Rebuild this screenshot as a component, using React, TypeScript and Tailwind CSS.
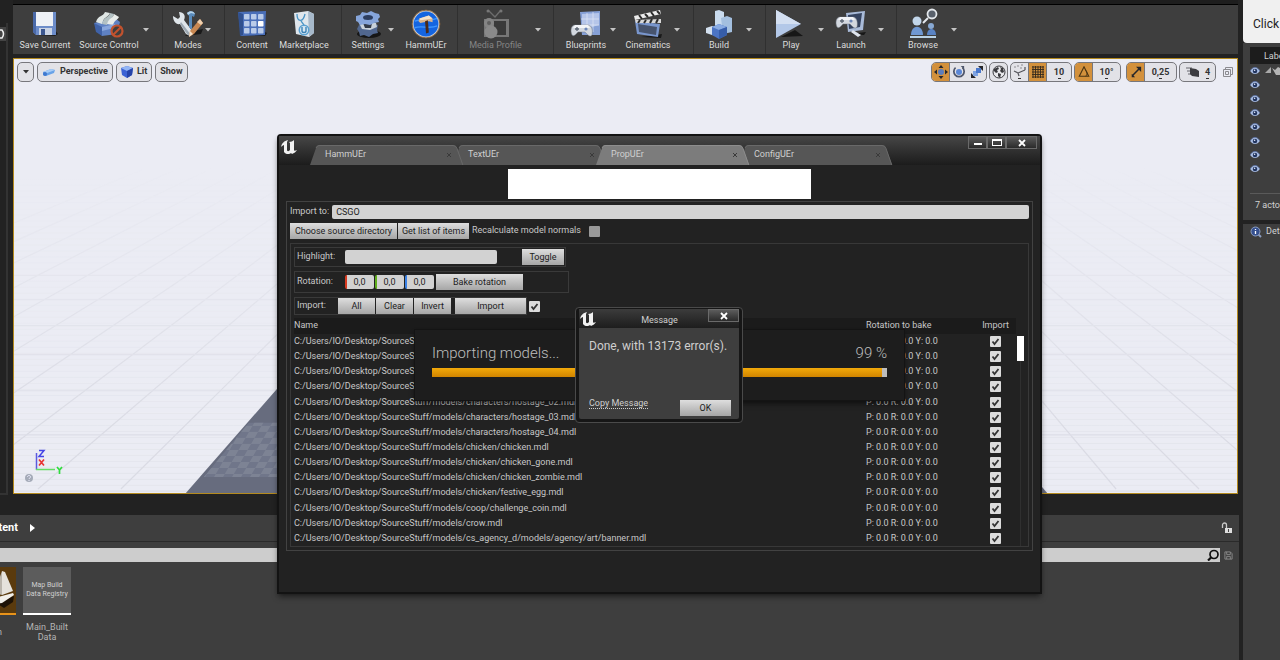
import React from 'react';
import clsx from 'clsx';

const PREFIX = 'C:/Users/IO/Desktop/SourceStuff/models/';

const models = [
  'characters/hostage.mdl',
  'characters/hostage_01.mdl',
  'characters/hostage_01_a.mdl',
  'characters/hostage_01_b.mdl',
  'characters/hostage_02.mdl',
  'characters/hostage_03.mdl',
  'characters/hostage_04.mdl',
  'chicken/chicken.mdl',
  'chicken/chicken_gone.mdl',
  'chicken/chicken_zombie.mdl',
  'chicken/festive_egg.mdl',
  'coop/challenge_coin.mdl',
  'crow.mdl',
  'cs_agency_d/models/agency/art/banner.mdl',
];

const light = 'bg-linear-to-b from-[#dedede] to-[#a6a6a6] text-[#1c1c1c] text-[9px] leading-4 h-4 whitespace-nowrap';

/* ---------- toolbar icons ---------- */

const SaveIcon = () => (
  <svg viewBox="0 0 28 28" className="size-7">
    <path d="M5 25l19 1 3-2-3-4z" fill="#1c1c1c" />
    <path d="M2 2h23v23H5l-3-3z" fill="#6c8cc9" />
    <path d="M2 2h3v23l-3-3z" fill="#4a69a8" />
    <path d="M5 2h17v14H5z" fill="#eef1f6" />
    <path d="M8 18h13v7H8z" fill="#c9d3e4" />
    <path d="M10 19h4v6h-4z" fill="#3c578f" />
  </svg>
);

const SourceIcon = () => (
  <svg viewBox="0 0 32 28" className="h-7 w-8">
    <path d="M1 13l21-5 5 4-3 12-15 2z" fill="#5f82c4" />
    <path d="M3 12C5 5 10 7 12 2l5 1c-2 5-6 3-8 11z" fill="#dfe6e4" />
    <path d="M9 14c2-8 7-6 8-11l4 1c-1 5-5 4-7 11z" fill="#b3c1c3" />
    <path d="M14 14c2-7 6-5 7-10l5 3c-2 4-4 2-6 8z" fill="#e8ecea" />
    <path d="M1 13l8 4v9l-6-4z" fill="#3f62a8" />
    <path d="M9 17l13-3-1 4-12 3z" fill="#88a6dc" />
    <circle cx="24" cy="21" r="5.5" fill="#3e3e3e" stroke="#c1522e" strokeWidth="2.2" />
    <path d="M20 25l8-8" stroke="#c1522e" strokeWidth="2.2" />
  </svg>
);

const ModesIcon = () => (
  <svg viewBox="0 0 32 28" className="h-7 w-8">
    <path d="M13 26l16-2 2-5-14 3z" fill="#191919" />
    <path d="M1 6l5 3 2-2-1-5c5 0 7 4 5 8l9 12-3 4-4-2L8 14C4 15 1 11 1 6z" fill="#dfe5ea" />
    <path d="M8 14l7 10 3 2 1-1L9 12z" fill="#9da8b2" />
    <path d="M15 3c3-3 7-2 8 1l-1 3-2-1v14l-3-3V6z" fill="#5a8bbb" />
    <path d="M15 3c3-3 7-2 8 1l-4-1-3 2z" fill="#b7d4ea" />
    <path d="M28 9l3 4-9 11-5 3 1-6z" fill="#c98852" />
    <path d="M28 9l3 4-2 2-4-3z" fill="#efd1b0" />
    <path d="M18 21l3 3-4 3z" fill="#f3e2cc" />
  </svg>
);

const ContentIcon = () => (
  <svg viewBox="0 0 30 28" className="h-7 w-[30px]">
    <path d="M4 26h24l2-3-6-3z" fill="#1c1c1c" />
    <path d="M1 2l28-1-1 24-24 1z" fill="#4a6fb9" />
    <path d="M1 2l5 2v21l-3 1z" fill="#31518f" />
    {[4, 11, 18].map((y) =>
      [7, 14, 21].map((x) => (
        <rect key={`${x}-${y}`} x={x} y={y} width="5.5" height="5.5" rx="0.8" fill={x === 21 && y === 11 ? '#fff' : '#b9cbe9'} />
      )),
    )}
  </svg>
);

const MarketIcon = () => (
  <svg viewBox="0 0 24 28" className="h-7 w-6">
    <path d="M2 3l14-2 6 3v19l-5 4-13-3z" fill="#dfe6ec" />
    <path d="M16 1l6 3v19l-5 4z" fill="#a7b9ca" />
    <path d="M5 4c0 8 6 9 8 0M9 10c0 3 3 3 3 6" stroke="#4a94c5" strokeWidth="1.3" fill="none" />
    <circle cx="12" cy="20" r="5.500" fill="#5aa0d0" />
    <circle cx="12" cy="20" r="4" fill="#d7e7f2" />
    <path d="M10 17v4c0 2 4 2 4 0v-4" stroke="#3c83b7" strokeWidth="1.4" fill="none" />
  </svg>
);

const SettingsIcon = () => (
  <svg viewBox="0 0 28 28" className="size-7">
    <ellipse cx="15" cy="24" rx="12" ry="4" fill="#161616" />
    <path d="M5 15l4-1 5-2 6 2 4 1-1 5 1 3-5 1-4 3-5-2-4 1-1-4-2-3z" fill="#51678f" />
    <path d="M5 13l8-2 9 2 1 4-7 3-8-1z" fill="#c9d2da" />
    <path d="M9 13h9l-1 5h-6z" fill="#333b48" />
    <path d="M2 6l4-1 2-3 5 1 4-2 4 2 4 1 1 3-2 2 1 3-5 1-4 2-5-1-5 1-2-3-2-1z" fill="#86a5da" />
    <ellipse cx="14" cy="7.500" rx="5" ry="2.500" fill="#2c3d5f" />
  </svg>
);

const HammerIcon = () => (
  <svg viewBox="0 0 32 32" className="size-[30px]">
    <circle cx="16" cy="16" r="14" fill="#1565e0" stroke="#c9d0d8" strokeWidth="1.6" />
    <circle cx="16" cy="16" r="14.800" fill="none" stroke="#8a6034" strokeWidth="1" />
    <path d="M4 13c8-3 15 1 24-3M4 20c8-3 15 2 24-2" stroke="#3f97ff" strokeWidth="1.500" fill="none" />
    <path d="M9 10l10-3 4 3v4l-4-1-9 2-2-2z" fill="#d9b58e" />
    <path d="M9 10l10-3 4 3-13 2z" fill="#f5e2cc" />
    <path d="M15 13l3-1 1 13-3 1z" fill="#4a2a18" />
  </svg>
);

const MediaIcon = () => (
  <svg viewBox="0 0 28 30" className="h-[30px] w-7">
    <path d="M6 1l7 7 6-7" stroke="#6d6d6d" strokeWidth="1.400" fill="none" />
    <circle cx="6" cy="2" r="1.500" fill="#777" />
    <circle cx="19" cy="2" r="1.500" fill="#777" />
    <path d="M2 10h25v18H2z" fill="#777" />
    <path d="M12 12h12v14H12z" fill="#3a3a3a" />
    <circle cx="7" cy="14" r="5" fill="#858585" />
    <circle cx="9" cy="23" r="6.500" fill="#8a8a8a" />
    <circle cx="7" cy="14" r="2" fill="#606060" />
  </svg>
);

const Pad = ({ x, y }: { x: number; y: number }) => (
  <g transform={`translate(${x} ${y})`}>
    <path d="M4 1h13c4 0 5 6 4 10-2 3-5-1-7-3H7c-2 2-4 5-6 3-2-4-1-10 3-10z" fill="#d3d8df" stroke="#6f7783" strokeWidth="0.500" />
    <path d="M4 1h13l2 3H2z" fill="#f2f4f7" />
    <path d="M4 5h4M6 3v4" stroke="#5b6472" strokeWidth="1.300" />
    <circle cx="15" cy="5" r="1.600" fill="#6c86b8" />
  </g>
);

const BlueprintIcon = () => (
  <svg viewBox="0 0 32 28" className="h-7 w-8">
    <path d="M10 2l20-1v24H12z" fill="#86a0d6" />
    <path d="M12 4l17-1v12l-17 5z" fill="#b5c5e9" />
    <path d="M17 3v18M23 2v20M11 9h18M11 15h18" stroke="#dfe7f6" strokeWidth="0.700" />
    <Pad x={1} y={14} />
  </svg>
);

const CineIcon = () => (
  <svg viewBox="0 0 30 30" className="size-[30px]">
    <path d="M8 28l20 1 1-4z" fill="#191919" />
    <path d="M2 12l25 3-2 13-21-3z" fill="#7996cd" />
    <path d="M5 15l19 3-1 8-17-3z" fill="#47546e" />
    <path d="M1 7l26-6 1 4L2 11z" fill="#ececec" />
    <path d="M2 11l26-1v4L3 14z" fill="#d8d8d8" />
    <path d="M6 6l3 4M12 5l3 3M18 3l3 4M24 2l3 3M7 11l-2 3M13 11l-2 3M19 10l-2 4M25 10l-2 4" stroke="#2b2b2b" strokeWidth="2" />
  </svg>
);

const BuildIcon = () => (
  <svg viewBox="0 0 28 30" className="h-[30px] w-7">
    <path d="M10 2l4-1 5 2v18H10z" fill="#c9dbee" />
    <path d="M16 9l6-2 5 2v14l-9 2z" fill="#a3bfdf" />
    <path d="M1 19l6-2 6 2v8l-6-1-6-2z" fill="#d3e0ef" />
    <path d="M7 18l7-3 8 3v8l-8 4-7-4z" fill="#4b74c4" />
    <path d="M7 18l7-3 8 3-8 3z" fill="#88abe3" />
    <path d="M14 21l8-3v8l-8 4z" fill="#365da9" />
  </svg>
);

const PlayIcon = () => (
  <svg viewBox="0 0 32 30" className="h-[30px] w-8">
    <path d="M6 28l22-1-8-6z" fill="#171717" />
    <path d="M1 1l25 14L1 29z" fill="#b3c8e8" />
    <path d="M1 1l25 14H1z" fill="#d3dff1" />
  </svg>
);

const LaunchIcon = () => (
  <svg viewBox="0 0 32 28" className="h-7 w-8">
    <path d="M15 24l14 1 2-3z" fill="#171717" />
    <path d="M11 3l19-2-2 19-15 2z" fill="#a9bbd9" />
    <path d="M13 5l14-2-2 14-11 2z" fill="#35435f" />
    <path d="M18 20l8 5-3 2-7-5z" fill="#dfe5ee" />
    <Pad x={1} y={6} />
  </svg>
);

const BrowseIcon = () => (
  <svg viewBox="0 0 32 32" className="size-8">
    <path d="M3 29h26" stroke="#b9d2e6" strokeWidth="2" />
    <circle cx="10" cy="13" r="4.500" fill="#c2d6ea" />
    <path d="M4 27c0-11 12-11 12 0z" fill="#6f98d3" />
    <circle cx="24" cy="18" r="3" fill="#88a9d4" />
    <path d="M20 27c0-8 9-8 9 0z" fill="#5983c4" />
    <circle cx="25" cy="6" r="4.500" fill="#59616c" stroke="#e4e8ec" strokeWidth="1.800" />
    <path d="M21 10l-5 5" stroke="#e4e8ec" strokeWidth="2" />
  </svg>
);

const Tri = ({ className }: { className?: string }) => (
  <svg viewBox="0 0 6 4" className={clsx('h-1 w-1.5', className)}>
    <path d="M0 0h6L3 3.500z" fill="currentColor" />
  </svg>
);

type Tool = { label: string; icon: React.ReactNode; box: string; menu?: boolean; off?: boolean };

const groups: Tool[][] = [
  [
    { label: 'Save Current', icon: <SaveIcon />, box: 'w-16' },
    { label: 'Source Control', icon: <SourceIcon />, box: 'w-16', menu: true },
  ],
  [{ label: 'Modes', icon: <ModesIcon />, box: 'ml-2.5 w-[30px]', menu: true }],
  [
    { label: 'Content', icon: <ContentIcon />, box: 'w-[54px]' },
    { label: 'Marketplace', icon: <MarketIcon />, box: 'w-[50px]' },
  ],
  [
    { label: 'Settings', icon: <SettingsIcon />, box: 'ml-2 w-9', menu: true },
    { label: 'HammUEr', icon: <HammerIcon />, box: 'w-[60px]' },
  ],
  [{ label: 'Media Profile', icon: <MediaIcon />, box: 'w-[75px]', menu: true, off: true }],
  [
    { label: 'Blueprints', icon: <BlueprintIcon />, box: 'ml-2.5 w-11', menu: true },
    { label: 'Cinematics', icon: <CineIcon />, box: 'ml-1.5 w-12', menu: true },
  ],
  [{ label: 'Build', icon: <BuildIcon />, box: 'w-[50px]', menu: true }],
  [
    { label: 'Play', icon: <PlayIcon />, box: 'w-[50px]', menu: true },
    { label: 'Launch', icon: <LaunchIcon />, box: 'w-[50px]', menu: true },
  ],
  [{ label: 'Browse', icon: <BrowseIcon />, box: 'w-[52px]', menu: true }],
];

const groupWidths = [
  'w-[149px]',
  'w-[62px]',
  'w-[117px]',
  'w-[116px]',
  'w-24',
  'w-[140px]',
  'w-[72px]',
  'w-[131px]',
  'flex-1',
];

function Toolbar() {
  return (
    <div className="flex h-[49px] bg-[#3e3e3e]">
      {groups.map((group, i) => (
        <div key={i} className={clsx('flex items-stretch', groupWidths[i], i > 0 && 'border-l border-[#303030]')}>
          {group.map((t) => (
            <React.Fragment key={t.label}>
              <button
                type="button"
                className={clsx('flex shrink-0 flex-col items-center text-[9px]', t.box, t.off ? 'text-[#858585]' : 'text-[#dcdcdc]')}
              >
                <span className="flex h-[34px] items-center justify-center pt-1">{t.icon}</span>
                <span className="whitespace-nowrap leading-3">{t.label}</span>
              </button>
              {t.menu && (
                <span className="flex w-2.5 shrink-0 items-center justify-center">
                  <Tri className="text-[#c4c4c4]" />
                </span>
              )}
            </React.Fragment>
          ))}
        </div>
      ))}
    </div>
  );
}

/* ---------- viewport ---------- */

const fan = Array.from({ length: 31 }, (_, i) => 24 + 83 * (i - 8));

function Scene() {
  return (
    <svg viewBox="0 0 1224 433" preserveAspectRatio="none" className="absolute inset-0 size-full">
      <defs>
        <linearGradient id="fade" x1="0" y1="0" x2="0" y2="1">
          <stop offset="0.250" stopColor="#000" />
          <stop offset="0.850" stopColor="#fff" />
        </linearGradient>
        <mask id="far">
          <rect width="1224" height="433" fill="url(#fade)" />
        </mask>
        <pattern id="checker" width="18" height="12" patternUnits="userSpaceOnUse" patternTransform="skewX(-30)">
          <path d="M0 0h9v6H0zM9 6h9v6H9z" fill="#7d8394" />
        </pattern>
        <pattern id="fine" width="6" height="6" patternUnits="userSpaceOnUse">
          <path d="M0 5.500h6" stroke="#e0e1ea" strokeWidth="0.600" />
        </pattern>
      </defs>
      <rect width="1224" height="433" fill="#ebecf4" />
      <g mask="url(#far)">
        <rect width="1224" height="433" fill="url(#fine)" />
        {fan.map((x) => (
          <path key={x} d={`M650 -106L${x} 429`} stroke="#dadbe4" strokeWidth="1.200" />
        ))}
        {[216, 240, 266, 295, 331, 375, 431].map((y) => (
          <path key={y} d={`M0 ${y}H1224`} stroke="#dddee7" strokeWidth="1.200" />
        ))}
      </g>
      <path d="M172 433L330 253H880L1034 433z" fill="#676c7e" />
      <path d="M190 417L235 363H980L1020 417z" fill="#70768a" />
      <path d="M190 417L235 363H980L1020 417z" fill="url(#checker)" />
    </svg>
  );
}

const pill = 'flex h-5 items-center overflow-hidden rounded-[5px] border border-[#77777c] bg-[#e2e2e7] text-[9px] font-bold text-[#333]';
const hot = 'flex h-5 w-[18px] items-center justify-center border-r border-[#77777c] bg-[#d3913c]';
const cell = 'flex h-5 w-[18px] items-center justify-center';

const MoreDot = ({ text, className }: { text: string; className: string }) => (
  <button type="button" className={clsx('flex h-5 flex-col items-center justify-center leading-3', className)}>
    {text}
    <i className="block h-px w-[3px] bg-[#333]" />
  </button>
);

const MoveArrows = () => (
  <svg viewBox="0 0 14 14" className="size-3.5">
    <path d="M7 0l2.500 3h-5zM7 14l2.500-3h-5zM0 7l3-2.500v5zM14 7l-3-2.500v5z" fill="#26262a" />
    <circle cx="7" cy="7" r="3" fill="#5b7dbd" />
  </svg>
);

function ViewportBar() {
  return (
    <div className="relative flex items-start justify-between pt-[3px] pr-[3px] pl-[3px]">
      <div className="flex gap-[3px]">
        <button type="button" aria-label="Viewport options" className={clsx(pill, 'w-[17px] justify-center')}>
          <Tri />
        </button>
        <button type="button" className={clsx(pill, 'gap-1 px-1')}>
          <svg viewBox="0 0 14 10" className="h-2.5 w-3.5">
            <path d="M1 5l8-3 4 1-1 3-8 3-3-1z" fill="#69a3e8" />
            <path d="M1 5l8-3 4 1-8 3z" fill="#a9cdf6" />
            <circle cx="3" cy="7" r="2" fill="#3f79cf" />
          </svg>
          Perspective
        </button>
        <button type="button" className={clsx(pill, 'gap-1 px-1')}>
          <svg viewBox="0 0 12 12" className="size-3">
            <path d="M6 0l6 2-1 7-5 3-5-3-1-7z" fill="#3b62d4" />
            <path d="M6 0l6 2-6 3-6-3z" fill="#93b5f5" />
            <path d="M6 5v7l5-3 1-7z" fill="#2543a8" />
          </svg>
          Lit
        </button>
        <button type="button" className={clsx(pill, 'px-1')}>Show</button>
      </div>
      <div className="flex items-start gap-0.5">
        <div className={pill}>
          <button type="button" aria-label="Move" className={hot}><MoveArrows /></button>
          <button type="button" aria-label="Rotate" className={cell}>
            <svg viewBox="0 0 14 14" className="size-3">
              <circle cx="7" cy="7" r="3.500" fill="#5b87d6" />
              <path d="M3 2a6 6 0 1 0 8 0" fill="none" stroke="#4e566b" strokeWidth="2" />
              <path d="M9 0h4v4z" fill="#4e566b" />
            </svg>
          </button>
          <button type="button" aria-label="Scale" className={cell}>
            <svg viewBox="0 0 14 14" className="size-3.5">
              <path d="M8 1h5v5zM1 8v5h5z" fill="#26262a" />
              <path d="M3 11l8-8" stroke="#26262a" strokeWidth="1.800" />
              <path d="M3 6h5v5H3z" fill="#7ea3e2" />
              <path d="M6 3h5v5H6z" fill="#4a78cc" />
            </svg>
          </button>
        </div>
        <div className={pill}>
          <button type="button" aria-label="World space" className="flex size-[17px] items-center justify-center">
            <svg viewBox="0 0 14 14" className="size-3.5">
              <circle cx="7" cy="7" r="6" fill="#e9e9ec" stroke="#3a3a3e" />
              <path d="M2 4l4-2 1 2-2 1 1 2-2 1-2-2zM8 2l3 1 1 4-2 1-2-2 1-2zM6 8l3 1-1 4-2-2z" fill="#3a3a3e" />
            </svg>
          </button>
        </div>
        <div className={pill}>
          <button type="button" aria-label="Surface snapping" className={clsx(cell, 'border-r border-[#77777c]')}>
            <svg viewBox="0 0 14 16" className="h-4 w-3.5">
              <path d="M5 9l-4-2M5 9l7-3M5 9l1 3M12 3v3" stroke="#55555b" strokeWidth="1.200" fill="none" />
              <path d="M1 3h2M4 2h2M7 4h2M8 1h2" stroke="#8c8c92" strokeWidth="1.200" />
              <path d="M5 14h3v1H5z" fill="#333" />
            </svg>
          </button>
          <button type="button" aria-label="Grid snapping" className={hot}>
            <svg viewBox="0 0 12 12" className="size-3">
              <path d="M1 0v12M3.500 0v12M6 0v12M8.500 0v12M11 0v12M0 1h12M0 3.500h12M0 6h12M0 8.500h12M0 11h12" stroke="#33291c" strokeWidth="0.900" />
            </svg>
          </button>
          <MoreDot text="10" className="w-6" />
        </div>
        <div className={clsx(pill, 'mr-[3px]')}>
          <button type="button" aria-label="Angle snapping" className={hot}>
            <svg viewBox="0 0 14 14" className="size-3">
              <path d="M7 1l5.500 11h-11z" fill="none" stroke="#4a3413" strokeWidth="1.300" />
              <path d="M9 5c2 2 2 5 0 7" fill="none" stroke="#4a3413" />
            </svg>
          </button>
          <MoreDot text="10°" className="w-[27px]" />
        </div>
        <div className={pill}>
          <button type="button" aria-label="Scale snapping" className={hot}>
            <svg viewBox="0 0 14 14" className="size-3">
              <path d="M7 1h6v6zM2 9v4h4z" fill="#26262a" />
              <path d="M3 11l8-8" stroke="#26262a" strokeWidth="1.800" fill="none" />
            </svg>
          </button>
          <MoreDot text="0,25" className="w-[31px]" />
        </div>
        <div className={pill}>
          <span className="pl-1.5">
            <svg viewBox="0 0 14 12" className="h-3 w-3.5">
              <path d="M0 2h6M1 5h5M2 8h5" stroke="#66666c" />
              <path d="M4 2l6 1 3 2v6l-7-1-2-2z" fill="#3c3c40" />
            </svg>
          </span>
          <MoreDot text="4" className="w-[15px]" />
        </div>
        <button type="button" aria-label="Maximize viewport" className="mt-1 ml-1">
          <svg viewBox="0 0 12 12" className="size-3">
            <path d="M3.500 3V1.500h7v7H9M1.500 3.500h7v7h-7zM3.500 5.500h3v3h-3z" fill="none" stroke="#8b8b90" />
          </svg>
        </button>
      </div>
    </div>
  );
}

function Viewport() {
  return (
    <div className="relative flex flex-1 flex-col justify-between overflow-hidden border border-[#b48a1e]">
      <Scene />
      <ViewportBar />
      <svg viewBox="0 0 44 38" className="relative mb-2 ml-2.5 h-[38px] w-11">
        <path d="M12.500 6v17" stroke="#5a5ae0" strokeWidth="1.500" />
        <path d="M12 22.500h19" stroke="#63dd63" strokeWidth="1.500" />
        <path d="M15 3.500h5l-5 6h5" stroke="#4545e6" strokeWidth="1.500" fill="none" />
        <path d="M15 12.500l5 6M20 12.500l-5 6" stroke="#e83434" strokeWidth="1.700" />
        <path d="M33 20l2.500 3 2.500-3M35.500 23v4" stroke="#2fdd3c" strokeWidth="1.700" fill="none" />
        <circle cx="5" cy="31" r="4" fill="#a5abb8" />
        <path d="M3.500 30c0-2 3-2 3 0 0 1-1.500 1-1.500 2M5 33v1" stroke="#eef" fill="none" />
      </svg>
    </div>
  );
}

/* ---------- content browser ---------- */

function ContentBrowser() {
  return (
    <div className="h-[145px] overflow-hidden bg-[#3e3e3e]">
      <div className="flex h-[27px] items-center justify-between border-b border-[#2a2a2a] pr-1.5">
        <div className="flex items-center gap-3">
          <span className="-ml-6 w-[42px] text-right text-[11px] font-bold text-white">Content</span>
          <svg viewBox="0 0 5 8" className="h-2 w-[5px]">
            <path d="M0 0l5 4-5 4z" fill="#fff" />
          </svg>
        </div>
        <svg viewBox="0 0 12 12" className="size-3">
          <path d="M1.500 6V3a2 2 0 0 1 4 0v3" fill="none" stroke="#c9c9c9" strokeWidth="1.300" />
          <path d="M4 6h7v5H4z" fill="#dedede" />
          <path d="M7 7h1v3H7z" fill="#444" />
        </svg>
      </div>
      <div className="flex items-center gap-1 pt-1.5 pr-1.5">
        <label className="flex h-3.5 flex-1 items-center bg-[#cdcdcd] pr-px">
          <input aria-label="Search assets" className="h-3.5 min-w-0 flex-1 bg-transparent text-[9px] outline-none" />
          <svg viewBox="0 0 12 12" className="size-3">
            <circle cx="7" cy="5.500" r="4" fill="none" stroke="#111" strokeWidth="1.700" />
            <path d="M4 8.500l-3 3" stroke="#111" strokeWidth="2.200" />
          </svg>
        </label>
        <svg viewBox="0 0 10 10" className="size-[9px]">
          <path d="M1 1h6l2 2v6H1zM3 1v3h4V1M3 9V6h4v3" fill="none" stroke="#8c8c8c" />
        </svg>
      </div>
      <div className="-ml-8 flex gap-[7px] pt-[5px]">
        <div className="w-12">
          <div className="flex h-12 justify-end border-b-2 border-[#e8931a] bg-[#5a3a0d]">
            <svg viewBox="0 0 24 46" className="h-[46px] w-6">
              <path d="M4 36l18-7-1 6-9 6z" fill="#1d1206" />
              <path d="M10 4l3 1 8 19-11 4z" fill="#e5e2dc" />
              <path d="M10 4v24l-8-2z" fill="#b9b4ab" />
              <path d="M2 31l19-5 1 2-12 8-8 1z" fill="#f1efea" />
            </svg>
          </div>
          <div className="mt-3 pl-[29px] text-[9px] leading-[10px] text-[#b5b5b5]">n</div>
        </div>
        <div className="w-12 text-center">
          <div className="flex h-12 items-center justify-center border-b-2 border-white bg-[#5c5c5c] text-[7px] leading-[9px] text-[#d0d0d0]">
            <span className="whitespace-nowrap">
              Map Build
              <br />
              Data Registry
            </span>
          </div>
          <div className="mt-[7px] text-[9px] leading-[10px] text-[#b5b5b5]">
            Main_Built
            <br />
            Data
          </div>
        </div>
      </div>
    </div>
  );
}

/* ---------- outliner ---------- */

function SidePanel() {
  return (
    <div className="flex w-10 flex-col overflow-hidden bg-[#222] pl-[3px] text-[9px] text-[#d2d2d2]">
      <div className="flex h-[43px] shrink-0 items-center rounded-bl bg-[#f0f0f0] pt-1 pl-2.5 text-[12px] text-[#222]">Click</div>
      <div className="bg-[#3e3e3e] pl-[7px]">
        <div className="mt-1 h-[17px] overflow-hidden bg-[#1c1c1c] pl-3.5 leading-[18px] whitespace-nowrap">Label</div>
        <ul className="flex flex-col pb-[17px]">
          {Array.from({ length: 8 }, (_, i) => (
            <li key={i} className="flex h-3.5 items-center gap-1">
              <svg viewBox="0 0 12 10" className="h-2 w-2.5 shrink-0">
                <path d="M0 5c3-6 9-6 12 0-3 5-9 5-12 0z" fill="#a9bde2" />
                <circle cx="6" cy="5" r="2.800" fill="#223560" />
                <circle cx="5.500" cy="4" r="1" fill="#e8eefb" />
                <path d="M0 5c3-6 9-6 12 0" fill="none" stroke="#5d74a8" />
              </svg>
              {i === 0 && (
                <svg viewBox="0 0 18 10" className="h-2.5 w-[18px] shrink-0">
                  <path d="M7 1v6H1z" fill="#a9a9a9" />
                  <path d="M8 2l3 2 3-3 4 2v6h-6z" fill="#b5b5b5" />
                </svg>
              )}
            </li>
          ))}
        </ul>
        <div className="h-[27px] overflow-hidden border-t border-[#5a5a5a] pl-[5px] leading-[22px] whitespace-nowrap">7 actors</div>
      </div>
      <div className="mt-1 flex flex-1 flex-col bg-[#3e3e3e]">
        <div className="flex h-4 items-center gap-1 overflow-hidden pl-[7px] whitespace-nowrap">
          <svg viewBox="0 0 12 12" className="size-3 shrink-0">
            <path d="M8 8l3 3" stroke="#8d9fc2" strokeWidth="2" />
            <circle cx="5.500" cy="5.500" r="4.500" fill="#35508f" stroke="#8d9fc2" />
            <path d="M5.500 5v3M5.500 3v1" stroke="#fff" strokeWidth="1.300" />
          </svg>
          Details
        </div>
      </div>
    </div>
  );
}

/* ---------- importer window ---------- */

const ULogo = () => (
  <svg viewBox="0 0 18 16" className="h-4 w-[18px] shrink-0">
    <path
      d="M1 8C2 4 4 2 8 1L7 3v8c0 1.500 2 1.500 3 0V4L9 3c2 0 4-1 5-2l0 1v9c0 1 1 1 3 0-1 2-3 3-5 4l-1-1c-2 2-6 1-7-1V6C3 6 2 7 1 8z"
      fill="#f2f2f2"
    />
  </svg>
);

const CloseGlyph = () => (
  <svg viewBox="0 0 8 8" className="size-2">
    <path d="M1 1l6 6M7 1L1 7" stroke="#fff" strokeWidth="1.800" />
  </svg>
);

const sysBtn = 'flex h-[13px] items-center justify-center border border-[#6a6a6a] bg-linear-to-b from-[#5c5c5c] to-[#2b2b2b]';

const tabs = [
  { name: 'HammUEr', layer: 'z-20' },
  { name: 'TextUEr', layer: 'z-10' },
  { name: 'PropUEr', layer: 'z-20', active: true },
  { name: 'ConfigUEr', layer: 'z-0' },
];

const Check = ({ label, on, dim }: { label: string; on?: boolean; dim?: boolean }) => (
  <span className="relative block size-[11px]">
    <input
      type="checkbox"
      aria-label={label}
      defaultChecked={on}
      className={clsx('peer block size-[11px] appearance-none rounded-[1px]', dim ? 'bg-[#999]' : 'bg-[#dcdcdc]')}
    />
    <svg viewBox="0 0 11 11" className="pointer-events-none absolute inset-0 hidden size-[11px] peer-checked:block">
      <path d="M2.500 5.500L4.500 8l4-5" fill="none" stroke="#333" strokeWidth="1.800" />
    </svg>
  </span>
);

function TitleBar() {
  return (
    <div className="flex h-[29px] items-start bg-linear-to-b from-[#474747] to-[#1c1c1c] pr-[3px] pl-px">
      <div className="pt-[3px]">
        <ULogo />
      </div>
      <div className="flex flex-1 self-end pl-3">
        {tabs.map((t) => (
          <button
            key={t.name}
            type="button"
            className={clsx('relative flex h-5 w-[143px] items-center justify-between pr-px pl-[15px] text-[9px] text-[#d0d0d0]', t.layer)}
          >
            <svg viewBox="0 0 154 20" className="absolute top-0 left-0 h-5 w-[154px]">
              <path d="M0 20L6 3Q7 0 10 0h133q3 0 4 3l6 17z" fill={t.active ? '#7c7c7c' : '#565656'} />
              <path d="M6 3Q7 0 10 0.500h133q3 0 4 3l6 17" fill="none" stroke={t.active ? '#8d8d8d' : '#696969'} />
            </svg>
            <span className="relative">{t.name}</span>
            <svg viewBox="0 0 6 6" className="relative size-1.5">
              <path d="M1 1l4 4M5 1L1 5" stroke="#3a3a3a" />
            </svg>
          </button>
        ))}
      </div>
      <div className="flex">
        <button type="button" aria-label="Minimize" className={clsx(sysBtn, 'w-[19px]')}>
          <i className="mt-0.5 block h-0.5 w-2 bg-white" />
        </button>
        <button type="button" aria-label="Maximize" className={clsx(sysBtn, 'w-[19px]')}>
          <i className="block h-[7px] w-2.5 border border-t-2 border-white" />
        </button>
        <button type="button" aria-label="Close" className={clsx(sysBtn, 'w-[31px]')}>
          <CloseGlyph />
        </button>
      </div>
    </div>
  );
}

const axis = [
  { name: 'Roll', color: 'border-[#d8391f]' },
  { name: 'Pitch', color: 'border-[#5fae1c]' },
  { name: 'Yaw', color: 'border-[#3b82e6]' },
];

function ImporterWindow() {
  return (
    <section className="absolute top-[134px] left-[277px] w-[765px] rounded-t border-2 border-[#131313] bg-[#222] pb-[41px] text-[9px] text-[#c8c8c8] shadow-md shadow-black/40">
      <TitleBar />
      <div className="mx-auto mt-1 h-[30px] w-[303px] bg-white" />
      <div className="mx-[7px] mt-0.5 border border-[#424242] p-[3px]">
        <label className="flex items-center gap-[3px]">
          Import to:
          <input defaultValue="CSGO" className="h-3.5 min-w-0 flex-1 rounded-xs bg-[#d2d2d2] px-1 text-[#222] outline-none" />
        </label>
        <div className="mt-1 flex items-center gap-px">
          <button type="button" className={clsx(light, 'w-[107px]')}>Choose source directory</button>
          <button type="button" className={clsx(light, 'w-[71px]')}>Get list of items</button>
          <span className="w-[118px] pl-0.5 whitespace-nowrap">Recalculate model normals</span>
          <Check label="Recalculate model normals" dim />
        </div>
        <div className="mt-1 border border-[#383838] p-[3px] pb-0">
          <div className="flex h-5 w-[272px] items-center justify-between border border-[#3a3a3a] pr-px pl-0.5">
            <label className="flex items-center">
              <span className="w-12">Highlight:</span>
              <input className="h-3.5 w-[152px] rounded-xs bg-[#d2d2d2] px-1 text-[#222] outline-none" />
            </label>
            <button type="button" className={clsx(light, 'w-[42px]')}>Toggle</button>
          </div>
          <div className="mt-1 flex h-[22px] w-[275px] items-center border border-[#3a3a3a] pl-0.5">
            <span className="w-12">Rotation:</span>
            <div className="flex gap-px">
              {axis.map((a) => (
                <input
                  key={a.name}
                  aria-label={a.name}
                  defaultValue="0,0"
                  className={clsx('h-3.5 w-[29px] rounded-xs border-l-2 bg-[#d2d2d2] pr-0.5 text-center text-[#222] outline-none', a.color)}
                />
              ))}
            </div>
            <button type="button" className={clsx(light, 'ml-0.5 w-[87px]')}>Bake rotation</button>
          </div>
          <div className="mt-1 flex items-center">
            <div className="flex h-[18px] items-center gap-px border border-[#3a3a3a] pl-0.5">
              <span className="w-10">Import:</span>
              <button type="button" className={clsx(light, 'w-[37px]')}>All</button>
              <button type="button" className={clsx(light, 'w-[37px]')}>Clear</button>
              <button type="button" className={clsx(light, 'w-[37px]')}>Invert</button>
              <button type="button" className={clsx(light, 'ml-[3px] w-[71px]')}>Import</button>
            </div>
            <span className="ml-0.5">
              <Check label="Import enabled" on />
            </span>
          </div>
          <div className="mt-[3px] flex justify-between pr-px">
            <table className="h-[228px] flex-1 table-fixed">
              <colgroup>
                <col />
                <col className="w-[109px]" />
                <col className="w-[41px]" />
              </colgroup>
              <thead>
                <tr className="h-4 bg-[#1b1b1b] text-left">
                  <th className="p-0 font-normal">Name</th>
                  <th className="p-0 font-normal">Rotation to bake</th>
                  <th className="p-0 text-center font-normal">Import</th>
                </tr>
              </thead>
              <tbody>
                {models.map((m) => (
                  <tr key={m} className="leading-[15px] whitespace-nowrap">
                    <td className="p-0">{PREFIX + m}</td>
                    <td className="p-0">P: 0.0 R: 0.0 Y: 0.0</td>
                    <td className="p-0">
                      <span className="flex justify-center">
                        <Check label={m} on />
                      </span>
                    </td>
                  </tr>
                ))}
              </tbody>
            </table>
            <div className="mt-[18px] flex w-2 flex-col items-center">
              <div className="h-[25px] w-[7px] bg-white" />
              <div className="w-px flex-1 bg-[#2f2f2f]" />
            </div>
          </div>
        </div>
      </div>
    </section>
  );
}

function ProgressPopup() {
  return (
    <div className="absolute top-[329px] left-[414px] w-[491px] border border-[#141414] bg-[#1d1d1d] px-[17px] pt-3.5 pb-[23px] font-light text-[#bdbdbd] shadow-md shadow-black/40">
      <div className="flex justify-between text-[15px] leading-[18px]">
        <span>Importing models...</span>
        <span>99 %</span>
      </div>
      <div className="mt-1.5 h-[9px] bg-[#bdbdbd]">
        <div className="h-full bg-linear-to-b from-[#f2a90a] to-[#d08400]" style={{ width: '99%' }} />
      </div>
    </div>
  );
}

function MessageDialog() {
  return (
    <div role="dialog" className="absolute top-[307px] left-[575px] w-[168px] rounded border border-[#4a4a4a] bg-[#161616] p-[3px] pt-px text-[#cfcfcf]">
      <div className="flex h-[19px] items-start justify-between bg-linear-to-b from-[#3c3c3c] to-[#1d1d1d]">
        <div className="pt-0.5">
          <ULogo />
        </div>
        <span className="pt-1 pl-3.5 text-[9px] leading-[14px]">Message</span>
        <button type="button" aria-label="Close" className={clsx(sysBtn, 'w-[31px]')}>
          <CloseGlyph />
        </button>
      </div>
      <div className="rounded-b-xs bg-[#3e3e3e] px-2 pt-2.5 pb-[3px] pl-2.5">
        <p className="text-[12px] leading-4">Done, with 13173 error(s).</p>
        <div className="mt-[43px] flex items-start justify-between text-[9px]">
          <a href="#copy" className="leading-3 underline decoration-dotted underline-offset-2">Copy Message</a>
          <button type="button" className={clsx(light, 'mt-[3px] w-[51px]')}>OK</button>
        </div>
      </div>
    </div>
  );
}

export default function App() {
  return (
    <div className="relative flex h-screen overflow-hidden bg-[#222] font-['Roboto',sans-serif]">
      <div className="flex min-w-0 flex-1 flex-col pr-px">
        <div className="flex min-h-0 flex-1">
          <div className="mb-5 w-[13px] shrink-0 overflow-hidden pt-[23px] pr-[5px]">
            <div className="h-full border-r-2 border-b-2 border-[#333] pt-1">
              <svg viewBox="0 0 6 14" className="h-3.5 w-1.5 bg-[#444]">
                <path d="M0 3h2q3 4 0 8H0" fill="none" stroke="#eee" strokeWidth="1.500" />
              </svg>
            </div>
          </div>
          <div className="flex min-w-0 flex-1 flex-col pr-px pb-[21px]">
            <div className="h-[5px] border-b border-black bg-[#1e1e1e]" />
            <Toolbar />
            <div className="h-1" />
            <Viewport />
          </div>
        </div>
        <ContentBrowser />
      </div>
      <SidePanel />
      <ImporterWindow />
      <ProgressPopup />
      <MessageDialog />
    </div>
  );
}
